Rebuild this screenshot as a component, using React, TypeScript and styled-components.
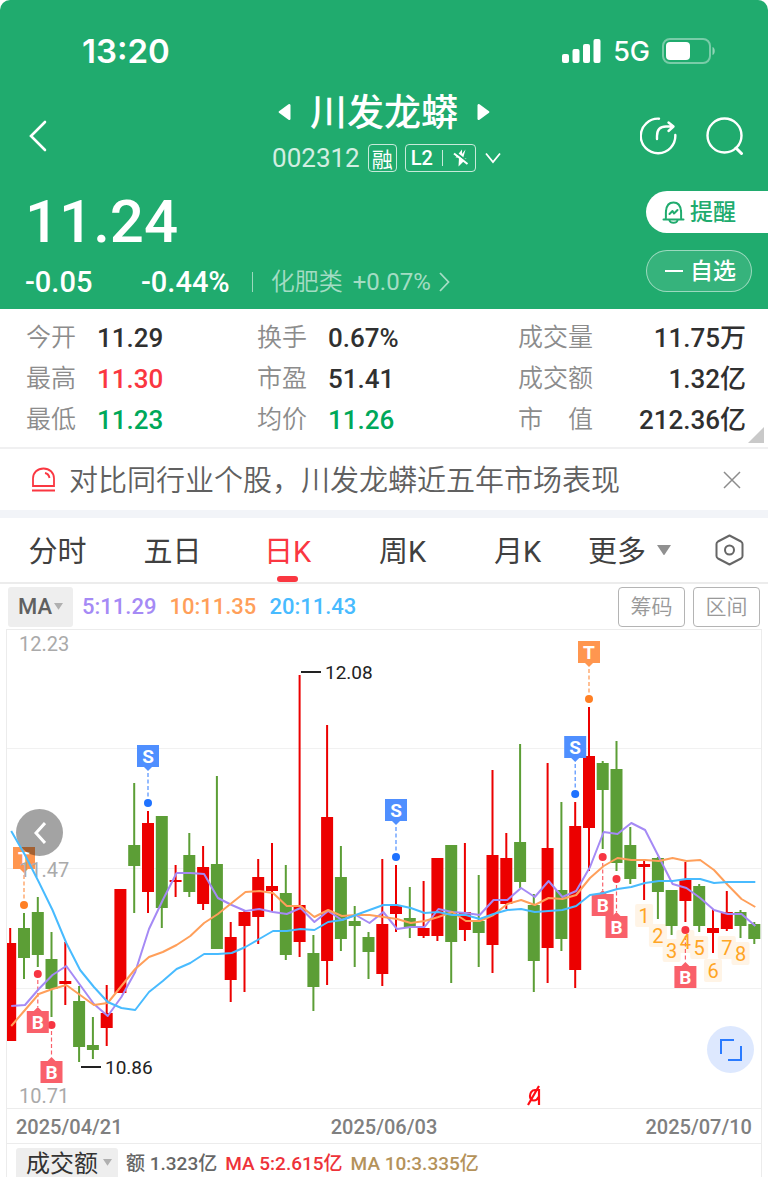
import React from 'react';
import styled, { createGlobalStyle } from 'styled-components';

const green = '#20ab6e';
const sans = '"Noto Sans CJK SC", sans-serif';

const GlobalStyle = createGlobalStyle`
  *, *::before, *::after { box-sizing: border-box; }
  body {
    margin: 0;
    background: #fff;
    color: #333;
    font-family: Roboto, ${sans};
    -webkit-font-smoothing: antialiased;
  }
  button, select {
    font: inherit;
    color: inherit;
    background: none;
    border: 0;
    padding: 0;
    margin: 0;
    cursor: pointer;
  }
  svg { display: block; flex: none; }
  p, h1, dl, dt, dd { margin: 0; font-weight: inherit; }
`;

/* ---------- header ---------- */

const Header = styled.header`
  background: ${green};
  color: #fff;
  border-radius: 10px 10px 0 0;
`;

const StatusBar = styled.div`
  display: flex;
  align-items: center;
  justify-content: space-between;
  height: 90px;
  padding: 12px 52px 0 82px;
  font-family: Inter, sans-serif;
`;

const Clock = styled.span`
  font-size: 33px;
  font-weight: 600;
`;

const StatusIcons = styled.div`
  display: flex;
  align-items: center;
  gap: 12px;
  font-size: 27px;
  font-weight: 500;
`;

const NavBar = styled.nav`
  display: grid;
  grid-template-columns: 1fr auto 1fr;
  align-items: center;
  height: 92px;
  padding: 0 24px;
`;

const IconButton = styled.button`
  display: flex;
  align-items: center;
  justify-content: center;
`;

const BackButton = styled(IconButton)`
  justify-self: start;
`;

const NavActions = styled.div`
  display: flex;
  justify-content: flex-end;
  gap: 28px;
`;

const Title = styled.div`
  display: flex;
  flex-direction: column;
  align-items: center;
`;

const NameRow = styled.div`
  display: flex;
  align-items: center;
  gap: 19px;
  height: 44px;
`;

const StockName = styled.h1`
  padding-bottom: 4px;
  font: 500 37px/40px ${sans};
`;

const CodeRow = styled.div`
  display: flex;
  align-items: center;
  gap: 8px;
  height: 48px;
  padding-left: 6px;
`;

const Code = styled.span`
  font-size: 26px;
  opacity: 0.8;
`;

const Badge = styled.span<{ $wide?: boolean }>`
  display: flex;
  align-items: center;
  gap: 9px;
  height: 28px;
  padding: 0 ${(p) => (p.$wide ? 5 : 3)}px;
  border: 1px solid rgba(255, 255, 255, 0.75);
  border-radius: 4px;
  font: ${(p) => (p.$wide ? '500 20px/26px Roboto' : `400 21px/24px ${sans}`)};
`;

const BadgeRule = styled.i`
  width: 1px;
  height: 16px;
  background: rgba(255, 255, 255, 0.75);
`;

const Quote = styled.section`
  display: flex;
  justify-content: space-between;
  height: 127px;
`;

const QuoteMain = styled.div`
  padding-left: 25px;
`;

const Price = styled.p`
  font-size: 60px;
  font-weight: 500;
  line-height: 80px;
`;

const ChangeRow = styled.div`
  display: flex;
  align-items: center;
  height: 40px;
  font-size: 29px;
  font-weight: 500;
`;

const Change = styled.span`
  width: 116px;
`;

const Sector = styled.a`
  display: flex;
  align-items: center;
  gap: 10px;
  height: 20px;
  margin-left: 22px;
  padding-left: 18px;
  border-left: 1px solid rgba(255, 255, 255, 0.55);
  color: rgba(255, 255, 255, 0.6);
  font-size: 24px;
  font-weight: 400;
  text-decoration: none;
`;

const SectorName = styled.span`
  padding-bottom: 4px;
  font: 350 24px/32px ${sans};
`;

const SectorMove = styled.span`
  display: flex;
  align-items: center;
  gap: 8px;
`;

const QuoteActions = styled.div`
  display: flex;
  flex-direction: column;
  gap: 17px;
  width: 122px;
  padding-top: 9px;
`;

const Pill = styled.button<{ $solid?: boolean }>`
  display: flex;
  align-items: center;
  gap: 5px;
  height: 42px;
  padding-left: 16px;
  font: 500 23px/36px ${sans};
  ${(p) =>
    p.$solid
      ? `background: #fff; color: ${green}; border-radius: 21px 0 0 21px;`
      : `background: rgba(255, 255, 255, 0.1); border: 1px solid rgba(255, 255, 255, 0.5);
         border-radius: 21px; margin-right: 16px;`}
`;

const PillText = styled.span`
  padding-bottom: 4px;
`;

/* ---------- figures ---------- */

const Figures = styled.section`
  position: relative;
  display: grid;
  grid-template-columns: 231fr 261fr 228fr;
  padding: 8px 22px 7px 26px;
  border-bottom: 2px solid #f0f0f1;
`;

const FigureList = styled.dl`
  display: grid;
  grid-template-columns: auto 1fr;
  column-gap: 21px;
  grid-auto-rows: 41px;
  align-items: center;
  font-size: 26px;
`;

const FigureLabel = styled.dt`
  padding-bottom: 6px;
  color: #8c8c8c;
  font: 350 25px/34px ${sans};
`;

type Tone = 'up' | 'down' | 'plain';
const tones: Record<Tone, string> = { up: '#fa3741', down: '#00a85a', plain: '#303030' };

const FigureValue = styled.dd<{ $tone: Tone; $end?: boolean }>`
  color: ${(p) => tones[p.$tone]};
  font-weight: 500;
  line-height: 38px;
  text-align: ${(p) => (p.$end ? 'right' : 'left')};
`;

const Corner = styled.i`
  position: absolute;
  right: 4px;
  bottom: 4px;
  border: 8px solid #c9c9c9;
  border-top-color: transparent;
  border-left-color: transparent;
`;

const Notice = styled.section`
  display: flex;
  align-items: center;
  height: 69px;
  padding: 0 27px 8px 31px;
  gap: 13px;
  box-shadow: inset 0 -8px #f2f4f8;
  color: #606060;
`;

const NoticeText = styled.p`
  flex: 1;
  padding-bottom: 4px;
  white-space: nowrap;
  font: 350 29px/44px ${sans};
`;

/* ---------- period tabs ---------- */

const Tabs = styled.nav`
  display: grid;
  grid-template-columns: repeat(6, 115fr) 78fr;
  height: 66px;
  border-bottom: 2px solid #ececec;
`;

const Tab = styled.button<{ $active?: boolean; $menu?: boolean }>`
  position: relative;
  display: flex;
  align-items: center;
  justify-content: center;
  gap: 11px;
  padding-right: ${(p) => (p.$menu ? 6 : 0)}px;
  color: ${(p) => (p.$active ? '#fa3741' : '#404040')};
  font: 400 29px/64px Roboto, ${sans};
  &::after {
    content: '';
    position: absolute;
    bottom: 0;
    width: 21px;
    height: 6px;
    border-radius: 3px;
    background: ${(p) => (p.$active ? '#fa3741' : 'transparent')};
  }
`;

const TabText = styled.span`
  padding-top: 4px;
  line-height: 60px;
`;

/* ---------- indicator bars ---------- */

const IndicatorBar = styled.div`
  display: flex;
  align-items: center;
  gap: 9px;
  height: 45px;
  padding: 0 8px;
  font-size: 22px;
`;

const Legends = styled.div`
  display: flex;
  gap: 13px;
  font-weight: 500;
`;

const PickerBox = styled.label<{ $cut?: boolean }>`
  display: flex;
  align-items: center;
  position: relative;
  height: ${(p) => (p.$cut ? 29 : 40)}px;
  border-radius: ${(p) => (p.$cut ? '3px 3px 0 0' : '3px')};
  background: #eee;
  svg {
    position: absolute;
    right: ${(p) => (p.$cut ? 6 : 10)}px;
    pointer-events: none;
  }
`;

const Picker = styled.select<{ $large?: boolean }>`
  appearance: none;
  height: 100%;
  padding: ${(p) => (p.$large ? '0 20px 2px 10px' : '0 20px 0 10px')};
  color: ${(p) => (p.$large ? '#333' : '#606060')};
  font: ${(p) => (p.$large ? `400 24px/28px ${sans}` : '500 22px/28px Roboto')};
`;

const Legend = styled.span<{ $color: string }>`
  color: ${(p) => p.$color};
`;

const OutlineButtons = styled.div`
  display: flex;
  gap: 8px;
  margin-left: auto;
`;

const OutlineButton = styled.button`
  width: 67px;
  height: 40px;
  padding-bottom: 3px;
  border: 1px solid #b4b4b4;
  border-radius: 4px;
  color: #999;
  font: 350 21px/34px ${sans};
`;

/* ---------- chart ---------- */

const ChartFrame = styled.section`
  margin: 0 6px;
  border: 1px solid #ececec;
  border-bottom: 0;
`;

const ChartArea = styled.div`
  position: relative;
  border-bottom: 1px solid #ececec;
`;

const Plot = styled.svg`
  width: 100%;
  height: auto;
  font-family: Roboto, sans-serif;
`;

const LineLayer = styled(Plot)`
  position: absolute;
  inset: 0;
  height: 100%;
  pointer-events: none;
`;

const RoundButton = styled.button<{ $side: 'left' | 'right' }>`
  position: absolute;
  display: flex;
  align-items: center;
  justify-content: center;
  width: 47px;
  height: 47px;
  border-radius: 50%;
  ${(p) =>
    p.$side === 'left'
      ? 'left: 9px; top: 179px; background: rgba(0, 0, 0, 0.36);'
      : 'right: 7px; bottom: 35px; background: #dde8fe;'}
`;

const Dates = styled.div`
  display: flex;
  justify-content: space-between;
  align-items: center;
  height: 35px;
  padding: 2px 9px 0;
  border-bottom: 1px solid #ececec;
  color: #808080;
  font-size: 20px;
  font-weight: 500;
`;

const VolumeBar = styled.div`
  display: flex;
  align-items: flex-end;
  gap: 8px;
  height: 33px;
  padding-left: 9px;
  font-size: 19px;
  font-weight: 500;
  line-height: 26px;
  white-space: nowrap;
`;

/* Candles: rising flag, high, body top, body bottom, low */
type Candle = [0 | 1, number, number, number, number];
const candles: Candle[] = [
  [1, 928, 943, 1041, 1041], [0, 913, 928, 958, 979], [0, 897, 912, 955, 967],
  [0, 932, 959, 989, 1017], [1, 942, 981, 984, 1005], [0, 986, 1001, 1047, 1062],
  [0, 1017, 1045, 1050, 1059], [1, 985, 1013, 1028, 1046], [1, 889, 889, 993, 993],
  [0, 783, 845, 866, 913], [1, 811, 823, 892, 913], [0, 816, 816, 908, 928],
  [1, 865, 880, 882, 897], [0, 833, 855, 892, 897], [1, 846, 867, 904, 910],
  [0, 776, 864, 949, 949], [1, 922, 937, 980, 1002], [1, 910, 912, 926, 992],
  [1, 859, 877, 917, 944], [1, 843, 886, 891, 912], [0, 865, 893, 955, 960],
  [1, 675, 905, 942, 957], [0, 935, 953, 987, 1011], [1, 725, 817, 961, 985],
  [0, 846, 877, 939, 951], [0, 906, 921, 926, 967], [0, 932, 937, 952, 979],
  [1, 859, 924, 974, 986], [1, 865, 906, 914, 932], [0, 887, 918, 927, 938],
  [1, 881, 928, 936, 938], [1, 858, 858, 936, 941], [0, 845, 845, 942, 983],
  [1, 843, 912, 930, 941], [0, 875, 921, 933, 967], [1, 770, 855, 945, 973],
  [1, 833, 858, 904, 909], [0, 744, 842, 882, 888], [0, 894, 905, 961, 992],
  [1, 763, 848, 948, 983], [0, 802, 890, 939, 951], [1, 802, 826, 970, 988],
  [1, 707, 756, 828, 871], [0, 761, 763, 790, 849], [0, 741, 769, 863, 871],
  [0, 827, 845, 879, 884], [1, 859, 864, 867, 900], [0, 857, 858, 892, 919],
  [0, 890, 890, 926, 935], [1, 862, 880, 901, 922], [0, 884, 886, 926, 932],
  [1, 909, 928, 933, 953], [1, 891, 912, 929, 931], [0, 910, 912, 926, 938],
  [0, 922, 924, 939, 944],
];

const averages = [
  {
    color: '#a58af5',
    ys: [1006, 1005, 989, 975, 966, 985, 1004, 1016, 997, 972, 929, 900, 873, 873, 874, 898, 905, 911,
      909, 912, 914, 908, 922, 911, 920, 915, 923, 912, 929, 927, 927, 909, 912, 913, 915, 900, 900,
      888, 897, 881, 897, 891, 867, 832, 834, 823, 830, 857, 884, 888, 898, 910, 914, 914, 926],
  },
  {
    color: '#ff9f5a',
    ys: [1026, 1010, 994, 989, 985, 995, 1005, 1003, 986, 969, 957, 952, 945, 936, 923, 914, 903, 892,
      891, 893, 906, 906, 917, 910, 916, 915, 915, 917, 919, 923, 921, 917, 912, 921, 921, 915, 904,
      900, 905, 898, 899, 895, 878, 866, 858, 860, 860, 861, 858, 861, 860, 870, 885, 899, 907],
  },
  {
    color: '#48bbff',
    ys: [831, 855, 882, 910, 943, 970, 987, 1002, 1008, 1010, 992, 981, 969, 963, 954, 954, 953, 947,
      939, 931, 931, 929, 930, 922, 920, 915, 910, 905, 905, 908, 913, 912, 915, 915, 919, 914, 910,
      909, 912, 911, 910, 906, 895, 893, 889, 887, 883, 881, 881, 879, 879, 883, 882, 882, 882],
  },
];

const cx = (i: number) => Math.round((10.2 + i * 13.78) * 10) / 10;

const signalColors = {
  S: { flag: '#4f8fff', dot: '#1f72ff' },
  T: { flag: '#ff964f', dot: '#ff7f24' },
  B: { flag: '#f9606a', dot: '#f73542' },
};

/* kind, candle index, dot y, top edge of the flag */
type Signal = ['S' | 'T' | 'B', number, number, number];
const signals: Signal[] = [
  ['T', 1, 905, 847], ['S', 10, 803, 745], ['S', 28, 857, 799], ['S', 41, 794, 736],
  ['T', 42, 699, 641], ['B', 3, 1025, 1061], ['B', 2, 974, 1011], ['B', 43, 857, 894],
  ['B', 44, 879, 916], ['B', 49, 930, 966],
];

const counts = [916, 936, 951, 942, 948, 971, 948, 954];

const VIEW = '7 630 754 478';

function SignalMark({ signal: [kind, index, dotY, top] }: { signal: Signal }) {
  const x = cx(index);
  const { flag, dot } = signalColors[kind];
  const below = kind === 'B';
  const tip = below
    ? `M${x - 4} ${top}l4 -4l4 4z`
    : `M${x - 4} ${top + 22}l4 4l4 -4z`;
  return (
    <g>
      <line x1={x} x2={x} y1={below ? dotY + 6 : top + 28} y2={below ? top - 4 : dotY - 5}
        stroke={flag} strokeWidth="1.2" strokeDasharray="4 2.5" />
      <circle cx={x} cy={dotY} r="4" fill={dot} />
      <path d={`M${x - 11} ${top}h22v22h-22z${tip}`} fill={flag} />
      <text x={x} y={top + 18} fill="#fff" fontSize="19" fontWeight="700" textAnchor="middle">{kind}</text>
    </g>
  );
}

function CandleChart() {
  return (
    <ChartArea>
      <Plot viewBox={VIEW} role="img" aria-label="日K线图">
        {[748, 868, 988].map((y) => (
          <line key={y} x1="7" x2="761" y1={y + 0.5} y2={y + 0.5} stroke="#f1f1f1" />
        ))}
        {counts.map((y, i) => (
          <rect key={i} x={cx(46 + i) - 9} y={y - 12} width="18" height="23" rx="2" fill="#fff4e6" />
        ))}
        {candles.map(([up, high, top, bottom, low], i) => (
          <g key={i} fill={up ? '#ec0000' : '#5c9e36'}>
            <rect x={cx(i) - 1} y={high} width="2" height={low - high} />
            <rect x={cx(i) - 6} y={top} width="12" height={bottom - top} />
          </g>
        ))}
        {signals.map((s) => <SignalMark key={s.join()} signal={s} />)}
        {counts.map((y, i) => (
          <text key={i} x={cx(46 + i)} y={y + 7} fill="#ffa524" fontSize="20" textAnchor="middle">{i + 1}</text>
        ))}
        <g fill="#aaa" fontSize="20">
          <text x="19" y="651">12.23</text>
          <text x="19" y="877">11.47</text>
          <text x="19" y="1103">10.71</text>
        </g>
        <g fill="#222" fontSize="19">
          <rect x="301" y="671" width="20" height="2" />
          <text x="325" y="679">12.08</text>
          <rect x="81" y="1066" width="20" height="2" />
          <text x="105" y="1074">10.86</text>
        </g>
        <path d="M528 1105L539 1086M539 1089v16M539 1090h-4c-3 0-5 3-5 6s1.500 4.500 4 4.500c2.500 0 4-2 5-4"
          fill="none" stroke="#ff0d14" strokeWidth="2.2" />
      </Plot>
      <RoundButton $side="left" aria-label="向前">
        <svg width="12" height="22" viewBox="0 0 12 22" fill="none" stroke="#fff" strokeWidth="3">
          <path d="M11 1L2 11l9 10" />
        </svg>
      </RoundButton>
      <LineLayer viewBox={VIEW} aria-hidden="true">
        {averages.map(({ color, ys }) => (
          <polyline key={color} fill="none" stroke={color} strokeWidth="2" strokeLinejoin="round"
            points={ys.map((y, i) => `${cx(i) + 1},${y}`).join(' ')} />
        ))}
      </LineLayer>
      <RoundButton $side="right" aria-label="全屏">
        <svg width="22" height="22" viewBox="0 0 22 22" fill="none" stroke="#2a7bff" strokeWidth="2">
          <path d="M1 15V1h13M21 7v14H8" />
        </svg>
      </RoundButton>
    </ChartArea>
  );
}

function Caret({ size, color }: { size: number; color: string }) {
  return (
    <svg width={size} height={size * 0.75} viewBox="0 0 12 9" fill={color}><path d="M0 0h12L6 9z" /></svg>
  );
}

type Figure = [label: string, value: string, tone?: Tone];
const figures: Figure[][] = [
  [['今开', '11.29'], ['最高', '11.30', 'up'], ['最低', '11.23', 'down']],
  [['换手', '0.67%'], ['市盈', '51.41'], ['均价', '11.26', 'down']],
  [['成交量', '11.75万'], ['成交额', '1.32亿'], ['市　值', '212.36亿']],
];

export default function App() {
  return (
    <main>
      <GlobalStyle />
      <Header>
        <StatusBar>
          <Clock>13:20</Clock>
          <StatusIcons>
            <svg width="39" height="24" viewBox="0 0 39 24" fill="#fff">
              <rect y="15" width="7" height="9" rx="2" />
              <rect x="10.500" y="10" width="7" height="14" rx="2" />
              <rect x="21" y="5" width="7" height="19" rx="2" />
              <rect x="31.500" width="7" height="24" rx="2" />
            </svg>
            <span>5G</span>
            <svg width="54" height="26" viewBox="0 0 54 26">
              <rect x="1" y="1" width="47" height="24" rx="7" fill="none" stroke="#fff" strokeOpacity="0.4" strokeWidth="2" />
              <rect x="4" y="4" width="24" height="18" rx="4" fill="#fff" />
              <path d="M50.500 9c3 1 3 7 0 8z" fill="#fff" fillOpacity="0.5" />
            </svg>
          </StatusIcons>
        </StatusBar>
        <NavBar>
          <BackButton aria-label="返回">
            <svg width="28" height="34" viewBox="0 0 28 34" fill="none" stroke="#fff" strokeWidth="2.600" strokeLinecap="round">
              <path d="M21 3L7 17l14 14" />
            </svg>
          </BackButton>
          <Title>
            <NameRow>
              <IconButton aria-label="上一只">
                <svg width="13" height="18" viewBox="0 0 13 18" fill="#fff">
                  <path d="M1 8.200L10.500 1.300Q12.500 0.300 12.500 2.500V15.500Q12.500 17.700 10.500 16.700L1 9.800Q0 9 1 8.200z" />
                </svg>
              </IconButton>
              <StockName>川发龙蟒</StockName>
              <IconButton aria-label="下一只">
                <svg width="13" height="18" viewBox="0 0 13 18" fill="#fff">
                  <path d="M12 8.200L2.500 1.300Q0.500 0.300 0.500 2.500V15.500Q0.500 17.700 2.500 16.700L12 9.800Q13 9 12 8.200z" />
                </svg>
              </IconButton>
            </NameRow>
            <CodeRow>
              <Code>002312</Code>
              <Badge>融</Badge>
              <Badge $wide>
                L2
                <BadgeRule />
                <svg width="18" height="18" viewBox="0 0 18 18" fill="#fff">
                  <path d="M10 0.500L3.500 8.500H7L6.500 17.500L14.500 9.500H11L13.500 0.500L10 5z" />
                  <path d="M3 3L16.500 13.500" stroke={green} strokeWidth="2" />
                  <path d="M2 4.500L15.500 15" stroke="#fff" strokeWidth="2" />
                </svg>
              </Badge>
              <IconButton aria-label="展开">
                <svg width="18" height="12" viewBox="0 0 18 12" fill="none" stroke="#fff" strokeWidth="1.800">
                  <path d="M2 1.500L9 10l7-8.500" />
                </svg>
              </IconButton>
            </CodeRow>
          </Title>
          <NavActions>
            <IconButton aria-label="分享">
              <svg width="38" height="38" viewBox="0 0 38 38" fill="none" stroke="#fff" strokeWidth="2.400" strokeLinecap="round" strokeLinejoin="round">
                <path d="M19 1.700A17.300 17.300 0 1 0 35.300 18" />
                <path d="M17 22v-3c0-6 3-9.500 9-9.500h7M28.500 5.500L33.500 9.500l-5 4.500" />
              </svg>
            </IconButton>
            <IconButton aria-label="搜索">
              <svg width="38" height="38" viewBox="0 0 38 38" fill="none" stroke="#fff" strokeWidth="2.400" strokeLinecap="round">
                <circle cx="18.500" cy="18.500" r="17" />
                <path d="M30 31l5.500 5.500" strokeWidth="3" />
              </svg>
            </IconButton>
          </NavActions>
        </NavBar>
        <Quote>
          <QuoteMain>
            <Price>11.24</Price>
            <ChangeRow>
              <Change>-0.05</Change>
              <span>-0.44%</span>
              <Sector href="#sector">
                <SectorName>化肥类</SectorName>
                <SectorMove>
                  +0.07%
                  <svg width="11" height="20" viewBox="0 0 11 20" fill="none" stroke="currentColor" strokeWidth="1.800">
                    <path d="M1 1l8.500 9L1 19" />
                  </svg>
                </SectorMove>
              </Sector>
            </ChangeRow>
          </QuoteMain>
          <QuoteActions>
            <Pill $solid>
              <svg width="23" height="23" viewBox="0 0 23 23" fill="none" stroke="currentColor" strokeWidth="2" strokeLinejoin="round" strokeLinecap="round">
                <path d="M1.500 18.500h20M3.500 18.500c1-2 0-5 .5-8.500C4.500 4.500 7.500 1.500 11.500 1.500S18.500 4.500 19 10c.5 3.500-.5 6.500 .5 8.500" />
                <path d="M7.500 19.500c1 3 7 3 8 0M7.500 13l3-3 1.500 2.500 3.500-3.500" />
              </svg>
              <PillText>提醒</PillText>
            </Pill>
            <Pill>
              <svg width="22" height="22" viewBox="0 0 22 22" stroke="#fff" strokeWidth="2">
                <path d="M2 11h18" />
              </svg>
              <PillText>自选</PillText>
            </Pill>
          </QuoteActions>
        </Quote>
      </Header>

      <Figures>
        {figures.map((list, col) => (
          <FigureList key={col}>
            {list.map(([label, value, tone]) => (
              <React.Fragment key={label}>
                <FigureLabel>{label}</FigureLabel>
                <FigureValue $tone={tone ?? 'plain'} $end={col === 2}>{value}</FigureValue>
              </React.Fragment>
            ))}
          </FigureList>
        ))}
        <Corner />
      </Figures>

      <Notice>
        <svg width="25" height="25" viewBox="0 0 25 25" fill="none" stroke="#fa3741" strokeWidth="1.800">
          <path d="M2 19V11.500C2 5.500 6.500 1.500 12.500 1.500S23 5.500 23 11.500V19zM1 23.500h23M14 6c2.500.5 4 2 4.500 5" />
        </svg>
        <NoticeText>对比同行业个股，川发龙蟒近五年市场表现</NoticeText>
        <IconButton aria-label="关闭">
          <svg width="18" height="18" viewBox="0 0 18 18" stroke="#8c8c8c" strokeWidth="1.500">
            <path d="M1 1l16 16M17 1L1 17" />
          </svg>
        </IconButton>
      </Notice>

      <Tabs>
        <Tab><TabText>分时</TabText></Tab>
        <Tab><TabText>五日</TabText></Tab>
        <Tab $active aria-current="true"><TabText>日K</TabText></Tab>
        <Tab><TabText>周K</TabText></Tab>
        <Tab><TabText>月K</TabText></Tab>
        <Tab $menu aria-haspopup="menu">
          <TabText>更多</TabText>
          <Caret size={14} color="#909090" />
        </Tab>
        <IconButton aria-label="设置">
          <svg width="29" height="32" viewBox="0 0 29 32" fill="none" stroke="#666" strokeWidth="2" strokeLinejoin="round">
            <path d="M14.500 1.500L26 7.500Q27.500 8.500 27.500 10V22Q27.500 23.500 26 24.500L14.500 30.500L3 24.500Q1.500 23.500 1.500 22V10Q1.500 8.500 3 7.500z" />
            <circle cx="14.500" cy="16" r="4.500" />
          </svg>
        </IconButton>
      </Tabs>

      <IndicatorBar>
        <PickerBox>
          <Picker aria-label="主图指标" defaultValue="MA"><option>MA</option></Picker>
          <Caret size={9} color="#b0b0b0" />
        </PickerBox>
        <Legends>
          <Legend $color="#a58af5">5:11.29</Legend>
          <Legend $color="#ff9f5a">10:11.35</Legend>
          <Legend $color="#48bbff">20:11.43</Legend>
        </Legends>
        <OutlineButtons>
          <OutlineButton>筹码</OutlineButton>
          <OutlineButton>区间</OutlineButton>
        </OutlineButtons>
      </IndicatorBar>

      <ChartFrame>
        <CandleChart />
        <Dates>
          <span>2025/04/21</span>
          <span>2025/06/03</span>
          <span>2025/07/10</span>
        </Dates>
        <VolumeBar>
          <PickerBox $cut>
            <Picker $large aria-label="副图指标" defaultValue="成交额"><option>成交额</option></Picker>
            <Caret size={9} color="#b0b0b0" />
          </PickerBox>
          <Legend $color="#666">额 1.323亿</Legend>
          <Legend $color="#ee3239">MA 5:2.615亿</Legend>
          <Legend $color="#b4925a">MA 10:3.335亿</Legend>
        </VolumeBar>
      </ChartFrame>
    </main>
  );
}
